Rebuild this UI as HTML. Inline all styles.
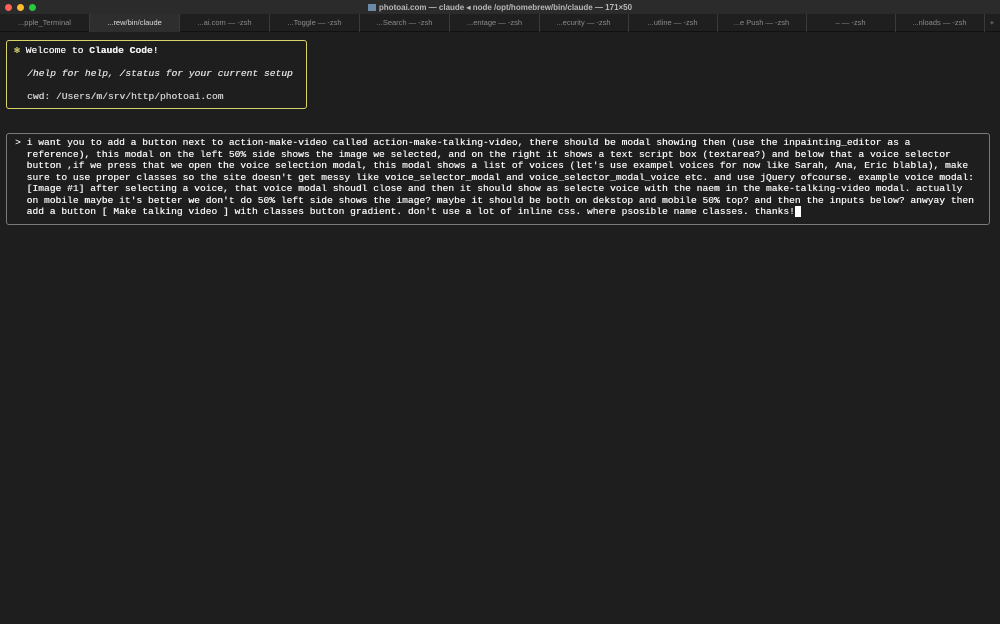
<!DOCTYPE html>
<html><head><meta charset="utf-8"><style>
*{margin:0;padding:0;box-sizing:border-box}
body{width:1000px;height:624px;background:#1e1e1e;overflow:hidden;font-family:"Liberation Mono",monospace;color:#f0f0f0;position:relative}
.title{position:absolute;left:0;top:0;width:1000px;height:14px;background:#2b2b2b;font-family:"Liberation Sans",sans-serif;font-size:8px;font-weight:bold;color:#b8b8b8;text-align:center;line-height:15px}
.dot{position:absolute;top:4px;width:7px;height:7px;border-radius:50%}
.tabs{position:absolute;left:0;top:14px;width:1000px;height:18px;background:#1f1f1f;border-bottom:1px solid #111}
.tab{position:absolute;top:0;height:18px;width:90px;border-right:1px solid #3a3a3a;font-family:"Liberation Sans",sans-serif;font-size:7.5px;color:#8a8a8a;text-align:center;line-height:18px}
.tab.act{background:#2e2e2e;color:#ddd}
.t{position:absolute;font-size:9.64px;white-space:pre;line-height:11.5px;text-shadow:0.3px 0 0 currentColor}
</style></head><body>
<div class="title"><span style="display:inline-block;width:8px;height:7px;background:#6a8aa8;vertical-align:-1px;margin-right:3px"></span>photoai.com — claude ◂ node /opt/homebrew/bin/claude — 171×50</div>
<div class="dot" style="left:5px;background:#fe5f57"></div>
<div class="dot" style="left:17px;background:#febc2e"></div>
<div class="dot" style="left:29px;background:#28c840"></div>
<div class="tabs">
<div class="tab" style="left:0">...pple_Terminal</div>
<div class="tab act" style="left:90px">...rew/bin/claude</div>
<div class="tab" style="left:180px">...ai.com — -zsh</div>
<div class="tab" style="left:270px">...Toggle — -zsh</div>
<div class="tab" style="left:360px">...Search — -zsh</div>
<div class="tab" style="left:450px">...entage — -zsh</div>
<div class="tab" style="left:539px">...ecurity — -zsh</div>
<div class="tab" style="left:628px">...utline — -zsh</div>
<div class="tab" style="left:717px">...e Push — -zsh</div>
<div class="tab" style="left:806px">– — -zsh</div>
<div class="tab" style="left:895px">...nloads — -zsh</div>
<div class="tab" style="left:984px;width:16px;border:0">+</div>
</div>
<div style="position:absolute;left:6px;top:40px;width:301px;height:69px;border:1.5px solid #d8d46a;border-radius:3px"></div>
<div class="t" style="left:14px;top:45px"><span style="color:#d8d46a">✻</span> Welcome to <b>Claude Code</b>!</div>
<div class="t" style="left:27px;top:68px;font-style:italic;color:#ddd">/help for help, /status for your current setup</div>
<div class="t" style="left:27px;top:91px;color:#ccc">cwd: /Users/m/srv/http/photoai.com</div>
<div style="position:absolute;left:6px;top:133px;width:984px;height:92px;border:1px solid #7a7a7a;border-radius:3px"></div>
<div class="t" style="left:15px;top:137px">&gt; i want you to add a button next to action-make-video called action-make-talking-video, there should be modal showing then (use the inpainting_editor as a
  reference), this modal on the left 50% side shows the image we selected, and on the right it shows a text script box (textarea?) and below that a voice selector
  button ,if we press that we open the voice selection modal, this modal shows a list of voices (let's use exampel voices for now like Sarah, Ana, Eric blabla), make
  sure to use proper classes so the site doesn't get messy like voice_selector_modal and voice_selector_modal_voice etc. and use jQuery ofcourse. example voice modal:
  [Image #1] after selecting a voice, that voice modal shoudl close and then it should show as selecte voice with the naem in the make-talking-video modal. actually
  on mobile maybe it's better we don't do 50% left side shows the image? maybe it should be both on dekstop and mobile 50% top? and then the inputs below? anwyay then
  add a button [ Make talking video ] with classes button gradient. don't use a lot of inline css. where psosible name classes. thanks!<span style="background:#fff">&nbsp;</span></div>
</body></html>
